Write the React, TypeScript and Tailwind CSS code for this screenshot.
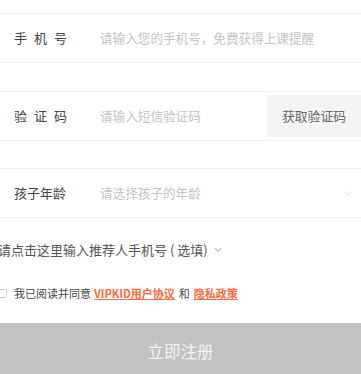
import { ChevronDown } from 'lucide-react'

const font = "font-['Noto_Sans_CJK_SC','Noto_Sans',sans-serif]"

export default function App() {
  return (
    <div className={`h-[374px] w-[361px] overflow-hidden bg-white pt-[13px] ${font}`}>
      {/* ── Phone ── */}
      <div className="flex h-[50px] items-center border-y border-[#eeeeee]">
        <span className="w-[100px] pl-[14px] text-[13px] tracking-[7px] text-[#444]">手机号</span>
        <span className="text-[12.6px] text-[#c4c4c4]">请输入您的手机号，免费获得上课提醒</span>
      </div>

      {/* ── Code ── */}
      <div className="mt-[28px] flex h-[50px] items-stretch border-y border-[#eeeeee]">
        <span className="flex w-[100px] items-center pl-[14px] text-[13px] tracking-[7px] text-[#444]">验证码</span>
        <span className="flex flex-1 items-center text-[12.6px] text-[#c4c4c4]">请输入短信验证码</span>
        <span className="my-[3px] flex w-[94px] items-center justify-center bg-[#f4f4f4] text-[12.8px] text-[#666]">
          获取验证码
        </span>
      </div>

      {/* ── Age ── */}
      <div className="mt-[27px] flex h-[50px] items-center border-y border-[#eeeeee]">
        <span className="w-[100px] pl-[14px] text-[13px] text-[#444]">孩子年龄</span>
        <span className="flex-1 text-[12.6px] text-[#c4c4c4]">请选择孩子的年龄</span>
        <ChevronDown className="mr-[7px] h-[13px] w-[13px] text-[#dadada]" strokeWidth={1.5} />
      </div>

      {/* ── Referrer ── */}
      <div className="-ml-[2px] mt-[23px] flex h-[18px] items-center text-[13px] text-[#555]">
        请点击这里输入推荐人手机号 ( 选填)
        <ChevronDown className="ml-[4px] h-[12px] w-[12px] text-[#777]" strokeWidth={1.5} />
      </div>

      {/* ── Agreement ── */}
      <div className="-ml-[2px] mt-[26px] flex h-[16px] items-center text-[11px] text-[#444]">
        <span className="h-[9px] w-[9px] rounded-[2px] border border-[#ccc]" />
        <span className="ml-[7px]">我已阅读并同意</span>
        <a className="ml-[3px] font-bold text-[#ff6a3d] underline">VIPKID用户协议</a>
        <span className="mx-[4px]">和</span>
        <a className="font-bold text-[#ff6a3d] underline">隐私政策</a>
      </div>

      {/* ── Submit ── */}
      <button className="mt-[22px] flex h-[60px] w-full items-start justify-center bg-[#c2c2c2] pt-[16px] text-[16.5px] text-[#f2f2f2]">
        立即注册
      </button>
    </div>
  )
}
